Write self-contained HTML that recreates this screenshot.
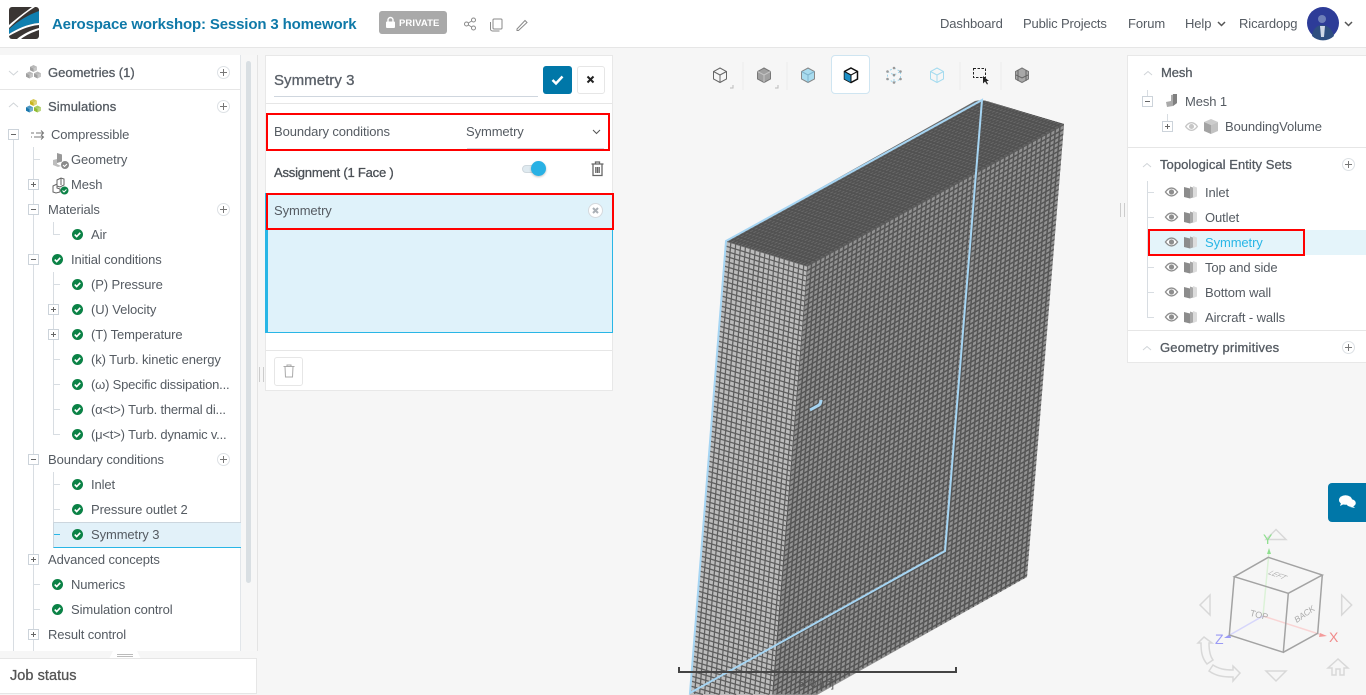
<!DOCTYPE html>
<html lang="en"><head><meta charset="utf-8"><title>Aerospace workshop: Session 3 homework</title>
<style>
html,body{margin:0;padding:0;width:1366px;height:695px;overflow:hidden;background:#f6f6f6;font-family:"Liberation Sans",sans-serif;color:#555b62}
.a{position:absolute}
.t{position:absolute;font-size:13px;line-height:16px;white-space:nowrap;color:#555b62;letter-spacing:-.1px;margin-top:1px}
.b{font-weight:bold}
.m{-webkit-text-stroke:.3px currentColor}
.bx{position:absolute;width:9px;height:9px;border:1px solid #ccd3da;background:#fff}
.bx:before{content:"";position:absolute;left:2px;top:4px;width:5px;height:1px;background:#666}
.bx.p:after{content:"";position:absolute;left:4px;top:2px;width:1px;height:5px;background:#666}
.l{position:absolute;background:#d8dde2}
.plus{position:absolute;width:11px;height:11px;margin:1px 0 0 1px;border:1px solid #dde1e5;border-radius:50%;background:#fff}
.plus:before{content:"";position:absolute;left:2px;top:5px;width:7px;height:1px;background:#777}
.plus:after{content:"";position:absolute;left:5px;top:2px;width:1px;height:7px;background:#777}
.ck{position:absolute;width:11px;height:11px}
svg{position:absolute;overflow:visible}
.r{position:absolute;border:2px solid #f00;box-sizing:border-box}
#vp{position:absolute;left:0;top:0;width:1366px;height:695px;overflow:hidden}
#vp svg{overflow:hidden}
</style></head><body>
<svg width="0" height="0" style="left:0;top:0"><defs>
<symbol id="c" viewBox="0 0 12 12" overflow="visible"><circle cx="6" cy="6" r="6" fill="#0b8246"/><path d="M3 6.100l2.100 2.100 3.900-4" fill="none" stroke="#fff" stroke-width="1.800"/></symbol>
<symbol id="e" viewBox="0 0 14 10" overflow="visible"><path d="M.5 5C3 1.500 5 .8 7 .8s4 .7 6.500 4.200C11 8.500 9 9.200 7 9.200S3 8.500 .5 5z" fill="#fff" stroke="#8e8e8e" stroke-width="1.500"/><circle cx="7" cy="5" r="2.800" fill="#8e8e8e"/></symbol>
<symbol id="f" viewBox="0 0 14 14" overflow="visible"><path d="M0 2l6 1.500v10L0 12z" fill="#8c8c8c"/><path d="M6 1.500l3 1v10l-3 1z" fill="#a8a8a8"/><path d="M9 1l4 1.500v9L9 13z" fill="#dcdcdc"/></symbol>
<symbol id="k" viewBox="0 0 8 8" overflow="visible"><path d="M4 0l4 2-4 2-4-2z" fill="currentColor" opacity=".75"/><path d="M0 2l4 2v4L0 6z" fill="currentColor"/><path d="M8 2L4 4v4l4-2z" fill="currentColor" opacity=".6"/></symbol>
<clipPath id="cL"><path d="M726 241L807 266L772 695H689.500z"/></clipPath>
<clipPath id="cR"><path d="M807 266L1064 124L1027 577L817 695H772z"/></clipPath>
<clipPath id="cT"><path d="M726 241L975 101Q982 99 990 102L1064 124L807 266z"/></clipPath>
<!-- mesh line families, built by doubling -->
<g id="lr1"><path d="M726 241l82.600 25.500"/></g>
<g id="lr2"><use href="#lr1"/><use href="#lr1" transform="translate(-.4 5)"/></g>
<g id="lr4"><use href="#lr2"/><use href="#lr2" transform="translate(-.8 10)"/></g>
<g id="lr8"><use href="#lr4"/><use href="#lr4" transform="translate(-1.600 20)"/></g>
<g id="lr16"><use href="#lr8"/><use href="#lr8" transform="translate(-3.200 40)"/></g>
<g id="lr32"><use href="#lr16"/><use href="#lr16" transform="translate(-6.400 80)"/></g>
<g id="lr64"><use href="#lr32"/><use href="#lr32" transform="translate(-12.800 160)"/></g>
<g id="rr1"><path d="M807 266l257.600 -142"/></g>
<g id="rr2"><use href="#rr1"/><use href="#rr1" transform="translate(-.4 5)"/></g>
<g id="rr4"><use href="#rr2"/><use href="#rr2" transform="translate(-.8 10)"/></g>
<g id="rr8"><use href="#rr4"/><use href="#rr4" transform="translate(-1.600 20)"/></g>
<g id="rr16"><use href="#rr8"/><use href="#rr8" transform="translate(-3.200 40)"/></g>
<g id="rr32"><use href="#rr16"/><use href="#rr16" transform="translate(-6.400 80)"/></g>
<g id="rr64"><use href="#rr32"/><use href="#rr32" transform="translate(-12.800 160)"/></g>
<g id="rc1"><path d="M853 240.600l-36.200 453"/></g>
<g id="rc2"><use href="#rc1"/><use href="#rc1" transform="translate(4.600 -2.540)"/></g>
<g id="rc4"><use href="#rc2"/><use href="#rc2" transform="translate(9.200 -5.080)"/></g>
<g id="rc8"><use href="#rc4"/><use href="#rc4" transform="translate(18.400 -10.160)"/></g>
<g id="rc16"><use href="#rc8"/><use href="#rc8" transform="translate(36.800 -20.320)"/></g>
<g id="rc32"><use href="#rc16"/><use href="#rc16" transform="translate(73.600 -40.640)"/></g>
<g id="tc1"><path d="M726 241l81 25"/></g>
<g id="tc2"><use href="#tc1"/><use href="#tc1" transform="translate(4.600 -2.540)"/></g>
<g id="tc4"><use href="#tc2"/><use href="#tc2" transform="translate(9.200 -5.080)"/></g>
<g id="tc8"><use href="#tc4"/><use href="#tc4" transform="translate(18.400 -10.160)"/></g>
<g id="tc16"><use href="#tc8"/><use href="#tc8" transform="translate(36.800 -20.320)"/></g>
<g id="tc32"><use href="#tc16"/><use href="#tc16" transform="translate(73.600 -40.640)"/></g>
<g id="tr1"><path d="M726 241l257.600 -142"/></g>
<g id="tr2"><use href="#tr1"/><use href="#tr1" transform="translate(3.240 1)"/></g>
<g id="tr4"><use href="#tr2"/><use href="#tr2" transform="translate(6.480 2)"/></g>
<g id="tr8"><use href="#tr4"/><use href="#tr4" transform="translate(12.960 4)"/></g>
<g id="tr16"><use href="#tr8"/><use href="#tr8" transform="translate(25.920 8)"/></g>
</defs></svg>

<!-- viewport mesh -->
<div id="vp">
<svg style="left:0;top:0" width="1366" height="695" fill="none">
<g clip-path="url(#cT)"><rect x="720" y="95" width="350" height="175" fill="#6a6a6a"/>
<g stroke="#525252" stroke-width="1.500">
<use href="#tr16"/><use href="#tr8" transform="translate(51.840 16)"/><use href="#tr2" transform="translate(77.760 24)"/>
<use href="#tc32"/><use href="#tc16" transform="translate(147.200 -81.280)"/><use href="#tc8" transform="translate(220.800 -121.920)"/><use href="#tc1" transform="translate(257.600 -142.240)"/>
</g></g>
<g clip-path="url(#cR)"><rect x="765" y="120" width="305" height="575" fill="#929292"/>
<g stroke="#565656" stroke-width="1.500">
<use href="#rr64"/><use href="#rr16" transform="translate(-25.600 320)"/><use href="#rr4" transform="translate(-32 400)"/><use href="#rr2" transform="translate(-33.600 420)"/>
<path d="M776.300 694L1030.200 554M784.900 694L1029.800 559M793.500 694L1029.400 564M802.200 694L1029 569M810.800 694L1028.600 574"/>
<use href="#rc32"/><use href="#rc8" transform="translate(147.200 -81.280)"/><use href="#rc4" transform="translate(184 -101.600)"/><use href="#rc2" transform="translate(202.400 -111.760)"/><use href="#rc1" transform="translate(211.600 -116.840)"/>
<path d="M807 266L772.800 694M811.600 263.460L777.200 694M816.200 260.900L781.600 694M820.800 258.400L786 694M825.400 255.800L790.400 694M830 253.300L794.700 694M834.600 250.800L799.100 694M839.200 248.200L803.500 694M843.800 245.700L807.900 694M848.400 243.100L812.300 694"/>
</g></g>
<g clip-path="url(#cL)"><rect x="680" y="235" width="130" height="460" fill="#bcbcbc"/>
<g stroke="#5e5e5e" stroke-width="1.250">
<use href="#lr64"/><use href="#lr16" transform="translate(-25.600 320)"/><use href="#lr4" transform="translate(-32 400)"/><use href="#lr2" transform="translate(-33.600 420)"/>
<path d="M691.600 671L769.400 694.500M691.200 676L752.800 694.500M690.800 681L736.200 694.500M690.400 686L719.600 694.500M690 691L703 694.500"/>
<path d="M726 241L689.700 694M730.860 242.500L694.660 694M735.720 244L699.640 694M740.580 245.500L704.620 694M745.440 247L709.600 694M750.300 248.500L714.580 694M755.160 250L719.560 694M760.020 251.500L724.540 694M764.880 253L729.520 694M769.740 254.500L734.500 694M774.600 256L739.480 694M779.460 257.500L744.460 694M784.320 259L749.440 694M789.180 260.500L754.420 694M794.040 262L759.400 694M798.900 263.500L764.380 694M803.760 265L769.360 694M808.620 266.500L774.300 694"/>
</g></g>
<path d="M726 241L982 100L945 551L690 693z" stroke="#a6d5f3" stroke-width="2"/>
<path d="M810 410l9-5q2-2 2-5" stroke="#a6d5f3" stroke-width="3"/>
<path d="M679 667v5H956v-5" stroke="#444" stroke-width="2"/>
</svg>
</div>
<div class="t" style="left:798px;top:675px;font-size:11px;color:#555">500 [m]</div>

<!-- header -->
<div class="a" style="left:0;top:0;width:1366px;height:47px;background:#fff;border-bottom:1px solid #e6e6e6"></div>
<svg style="left:9px;top:7px" width="30" height="32" viewBox="0 0 30 32"><rect width="30" height="32" rx="3" fill="#3a3533"/><path d="M0 18C8 11 16 5 23 0H26C18 5 9 12 0 21z" fill="#fff"/><path d="M0 22C9 14 19 8 30 4V16C18 17 8 22 0 27z" fill="#0f7fb0"/><path d="M0 27C8 22 18 17 30 16V18C18 19 9 24 0 29z" fill="#fff"/><path d="M8 32C14 27 22 23 30 21V23C24 25 17 28 12 32z" fill="#fff"/></svg>
<div class="t b" style="left:52px;top:16px;font-size:15px;color:#0f79a8;letter-spacing:-.15px">Aerospace workshop: Session 3 homework</div>
<div class="a" style="left:379px;top:11px;width:68px;height:23px;background:#a9a9a9;border-radius:3px"></div>
<svg style="left:386px;top:17px" width="10" height="11" viewBox="0 0 10 11"><rect y="4.500" width="9" height="6.500" rx="1" fill="#fff"/><path d="M2 5V3a2.500 2.500 0 0 1 5 0v2" fill="none" stroke="#fff" stroke-width="1.400"/></svg>
<div class="t b" style="left:399px;top:15px;font-size:9.500px;color:#fff;letter-spacing:.1px">PRIVATE</div>
<svg style="left:464px;top:17px" width="70" height="16" fill="none" stroke="#8a8a8a" stroke-width="1"><circle cx="2.500" cy="7" r="2"/><circle cx="9.500" cy="3" r="2"/><circle cx="9.500" cy="11" r="2"/><path d="M4.300 6l3.400-2M4.300 8l3.400 2"/><rect x="29" y="2" width="9" height="10" rx="1"/><path d="M26.500 5v7a2 2 0 0 0 2 2h7"/><path d="M53 12l8-8.500 2 2-8.500 8H53z"/></svg>
<div class="t" style="left:940px;top:15px">Dashboard</div>
<div class="t" style="left:1023px;top:15px;letter-spacing:-.15px">Public Projects</div>
<div class="t" style="left:1128px;top:15px">Forum</div>
<div class="t" style="left:1185px;top:15px">Help</div>
<svg style="left:1217px;top:21px" width="9" height="6" fill="none" stroke="#555" stroke-width="1.500"><path d="M1 1l3.500 3.500L8 1"/></svg>
<div class="t" style="left:1239px;top:15px">Ricardopg</div>
<svg style="left:1307px;top:7px" width="32" height="32" viewBox="0 0 32 32"><circle cx="16" cy="16" r="16" fill="#2d3c98"/><circle cx="15" cy="12" r="4" fill="#6e7fb8"/><path d="M5 29c1-8 6-11 10-11s10 3 12 11a16 16 0 0 1-22 0z" fill="#2e4f80"/><path d="M13 19h5l-1 11h-3z" fill="#cfd8e6"/></svg>
<svg style="left:1344px;top:21px" width="9" height="6" fill="none" stroke="#555" stroke-width="1.500"><path d="M1 1l3.500 3.500L8 1"/></svg>

<!-- left panel -->
<div class="a" style="left:0;top:55px;width:257px;height:596px;background:#fff;border-right:1px solid #e4e4e4"></div>
<div class="a" style="left:240px;top:55px;width:1px;height:596px;background:#e2e6ea"></div>
<div class="a" style="left:241px;top:55px;width:16px;height:596px;background:#f7f7f7"></div>
<div class="a" style="left:246px;top:61px;width:5px;height:522px;background:#d9dfe3;border-radius:3px"></div>
<div class="a" style="left:0;top:89px;width:240px;height:1px;background:#e6e6e6"></div>
<svg style="left:8px;top:69px" width="12" height="40" fill="none" stroke="#d0d4d8" stroke-width="1"><path d="M1 2l4.500 4L10 2M1 38l4.500-4 4.500 4"/></svg>
<svg style="left:26px;top:65px" width="16" height="14"><g color="#a0a0a0"><use href="#k" x="4" y="0" width="7" height="7"/><use href="#k" x="0" y="6.500" width="7" height="7"/><use href="#k" x="8" y="6.500" width="7" height="7"/></g></svg>
<svg style="left:26px;top:99px" width="16" height="14"><use href="#k" x="4" y="0" width="7" height="7" color="#c9b51e"/><use href="#k" x="0" y="6.500" width="7" height="7" color="#1877ad"/><use href="#k" x="8" y="6.500" width="7" height="7" color="#8fbb2e"/></svg>
<div class="t m" style="left:48px;top:64px;letter-spacing:0">Geometries (1)</div>
<div class="t m" style="left:48px;top:98px;letter-spacing:.1px">Simulations</div>
<div class="plus" style="left:216px;top:65px"></div>
<div class="plus" style="left:216px;top:99px"></div>

<!-- tree lines -->
<div class="l" style="left:13px;top:140px;width:1px;height:511px"></div>
<div class="l" style="left:33px;top:147px;width:1px;height:504px"></div>
<div class="l" style="left:33px;top:159px;width:7px;height:1px"></div>
<div class="l" style="left:33px;top:584px;width:7px;height:1px"></div>
<div class="l" style="left:33px;top:609px;width:7px;height:1px"></div>
<div class="l" style="left:53px;top:222px;width:1px;height:13px"></div>
<div class="l" style="left:53px;top:234px;width:7px;height:1px"></div>
<div class="l" style="left:53px;top:272px;width:1px;height:163px"></div>
<div class="l" style="left:53px;top:284px;width:7px;height:1px"></div>
<div class="l" style="left:53px;top:359px;width:7px;height:1px"></div>
<div class="l" style="left:53px;top:384px;width:7px;height:1px"></div>
<div class="l" style="left:53px;top:409px;width:7px;height:1px"></div>
<div class="l" style="left:53px;top:434px;width:7px;height:1px"></div>
<div class="l" style="left:53px;top:472px;width:1px;height:63px"></div>
<div class="l" style="left:53px;top:484px;width:7px;height:1px"></div>
<div class="l" style="left:53px;top:509px;width:7px;height:1px"></div>
<div class="a" style="left:53px;top:522px;width:187px;height:24px;background:#e2f1f9;border-top:1px solid #ccd6de;border-bottom:1px solid #29b6e6;border-left:1px solid #ccd6de"></div>
<div class="a" style="left:54px;top:534px;width:6px;height:1px;background:#29b6e6"></div>

<div class="bx" style="left:8px;top:129px"></div>
<div class="bx p" style="left:28px;top:179px"></div>
<div class="bx" style="left:28px;top:204px"></div>
<div class="bx" style="left:28px;top:254px"></div>
<div class="bx p" style="left:48px;top:304px"></div>
<div class="bx p" style="left:48px;top:329px"></div>
<div class="bx" style="left:28px;top:454px"></div>
<div class="bx p" style="left:28px;top:554px"></div>
<div class="bx p" style="left:28px;top:629px"></div>

<svg style="left:30px;top:128px" width="16" height="13" fill="none" stroke="#777" stroke-width="1"><path d="M1 5h3M6 5h7m-2-2.500l2.500 2.500L11 7.500M1 9h1M4 9h9m-2-2l2.500 2L11 11.500"/></svg>
<svg style="left:52px;top:152px" width="17" height="17" viewBox="0 0 17 17"><path d="M5 1l5 1.500v7L5 11z" fill="#999"/><path d="M1 8l4-1v5l4 2-3 1-5-2z" fill="#bdbdbd"/><circle cx="13" cy="13" r="4" fill="#8a8a8a"/><path d="M11 13l1.500 1.500 2.500-2.500" stroke="#fff" fill="none"/></svg>
<svg style="left:52px;top:177px" width="17" height="18" viewBox="0 0 17 18" fill="none" stroke="#666"><path d="M5 3l4-2 3 1v6l-4 2-3-1zM1 9l4-2v4l3 1v3l-4 1-3-1zM5 3v6M9 1v7"/><circle cx="12.500" cy="13.500" r="4" fill="#0b8246" stroke="none"/><path d="M10.500 13.500l1.500 1.500 2.500-2.500" stroke="#fff"/></svg>

<div class="t" style="left:51px;top:126px">Compressible</div>
<div class="t" style="left:71px;top:151px">Geometry</div>
<div class="t" style="left:71px;top:176px">Mesh</div>
<div class="t" style="left:48px;top:201px">Materials</div>
<div class="plus" style="left:216px;top:202px"></div>
<svg class="ck" style="left:72px;top:229px"><use href="#c" width="11" height="11"/></svg><div class="t" style="left:91px;top:226px">Air</div>
<svg class="ck" style="left:52px;top:254px"><use href="#c" width="11" height="11"/></svg><div class="t" style="left:71px;top:251px">Initial conditions</div>
<svg class="ck" style="left:72px;top:279px"><use href="#c" width="11" height="11"/></svg><div class="t" style="left:91px;top:276px">(P) Pressure</div>
<svg class="ck" style="left:72px;top:304px"><use href="#c" width="11" height="11"/></svg><div class="t" style="left:91px;top:301px">(U) Velocity</div>
<svg class="ck" style="left:72px;top:329px"><use href="#c" width="11" height="11"/></svg><div class="t" style="left:91px;top:326px">(T) Temperature</div>
<svg class="ck" style="left:72px;top:354px"><use href="#c" width="11" height="11"/></svg><div class="t" style="left:91px;top:351px">(k) Turb. kinetic energy</div>
<svg class="ck" style="left:72px;top:379px"><use href="#c" width="11" height="11"/></svg><div class="t" style="left:91px;top:376px;letter-spacing:-.2px">(ω) Specific dissipation...</div>
<svg class="ck" style="left:72px;top:404px"><use href="#c" width="11" height="11"/></svg><div class="t" style="left:91px;top:401px;letter-spacing:-.2px">(α&lt;t&gt;) Turb. thermal di...</div>
<svg class="ck" style="left:72px;top:429px"><use href="#c" width="11" height="11"/></svg><div class="t" style="left:91px;top:426px;letter-spacing:-.2px">(μ&lt;t&gt;) Turb. dynamic v...</div>
<div class="t" style="left:48px;top:451px">Boundary conditions</div>
<div class="plus" style="left:216px;top:452px"></div>
<svg class="ck" style="left:72px;top:479px"><use href="#c" width="11" height="11"/></svg><div class="t" style="left:91px;top:476px">Inlet</div>
<svg class="ck" style="left:72px;top:504px"><use href="#c" width="11" height="11"/></svg><div class="t" style="left:91px;top:501px">Pressure outlet 2</div>
<svg class="ck" style="left:72px;top:529px"><use href="#c" width="11" height="11"/></svg><div class="t" style="left:91px;top:526px">Symmetry 3</div>
<div class="t" style="left:48px;top:551px">Advanced concepts</div>
<svg class="ck" style="left:52px;top:579px"><use href="#c" width="11" height="11"/></svg><div class="t" style="left:71px;top:576px">Numerics</div>
<svg class="ck" style="left:52px;top:604px"><use href="#c" width="11" height="11"/></svg><div class="t" style="left:71px;top:601px">Simulation control</div>
<div class="t" style="left:48px;top:626px">Result control</div>

<!-- job status -->
<div class="a" style="left:0;top:651px;width:257px;height:7px;background:#f6f6f6"></div>
<svg style="left:109px;top:651px" width="32" height="8"><path d="M0 8L4 0H28L32 8z" fill="#fff"/><path d="M8 3.500H24M8 5.500H24" stroke="#bbb"/></svg>
<div class="a" style="left:0;top:658px;width:256px;height:34px;background:#fff;border:1px solid #e6e6e6;border-left:0"></div>
<div class="t m" style="left:10px;top:667px;font-size:14.500px;color:#555;letter-spacing:.05px">Job status</div>

<!-- middle panel -->
<div class="a" style="left:265px;top:55px;width:348px;height:336px;background:#fff;border:1px solid #e8e8e8;box-sizing:border-box"></div>
<div class="t m" style="left:274px;top:71px;font-size:15px;line-height:17px;color:#5a6068;letter-spacing:.05px">Symmetry 3</div>
<div class="a" style="left:274px;top:96px;width:264px;height:1px;background:#cfd6de"></div>
<div class="a" style="left:266px;top:103px;width:346px;height:1px;background:#e6e6e6"></div>
<div class="a" style="left:543px;top:66px;width:29px;height:28px;background:#0077a8;border-radius:3px"></div>
<svg style="left:551px;top:74px" width="13" height="12" fill="none" stroke="#fff" stroke-width="2.500"><path d="M1.500 6l3.500 3.500L11.500 2.500"/></svg>
<div class="a" style="left:577px;top:66px;width:26px;height:26px;background:#fff;border:1px solid #e6e6e6;border-radius:3px"></div>
<svg style="left:586px;top:75px" width="10" height="10" fill="none" stroke="#222" stroke-width="2"><path d="M1.500 1.500l6 6M7.500 1.500l-6 6"/></svg>
<div class="t" style="left:274px;top:123px">Boundary conditions</div>
<div class="t" style="left:466px;top:123px">Symmetry</div>
<svg style="left:592px;top:129px" width="9" height="6" fill="none" stroke="#555"><path d="M1 1l3.500 3.500L8 1"/></svg>
<div class="a" style="left:467px;top:148px;width:137px;height:1px;background:#cfd6de"></div>
<div class="r" style="left:266px;top:113px;width:344px;height:38px"></div>
<div class="t m" style="left:274px;top:164px;color:#4a4f55;letter-spacing:-.2px">Assignment (1 Face )</div>
<div class="a" style="left:522px;top:165px;width:20px;height:8px;background:#dfeaf0;border:1px solid #cfd8de;border-radius:5px;box-sizing:border-box"></div>
<div class="a" style="left:531px;top:161px;width:15px;height:15px;background:#29b1e4;border-radius:50%;box-shadow:0 1px 2px rgba(0,0,0,.25)"></div>
<svg style="left:591px;top:161px" width="13" height="16" fill="none" stroke="#666" stroke-width="1.300"><path d="M.5 3h12M4.500 3V1h4v2M2 3v11.500h9V3M4.800 6v6M6.500 6v6M8.200 6v6"/></svg>
<div class="a" style="left:265px;top:193px;width:348px;height:140px;box-sizing:border-box;background:#dff2fa;border:1px solid #29b6e6;border-left:3px solid #29b6e6"></div>
<div class="r" style="left:266px;top:193px;width:348px;height:37px"></div>
<div class="t" style="left:274px;top:202px">Symmetry</div>
<svg style="left:588px;top:203px" width="15" height="15"><circle cx="7.500" cy="7.500" r="7" fill="#fff" stroke="#d5d9dd"/><path d="M5 5l5 5M10 5l-5 5" stroke="#aab0b6" stroke-width="2"/></svg>
<div class="a" style="left:266px;top:350px;width:346px;height:1px;background:#e6e6e6"></div>
<div class="a" style="left:274px;top:357px;width:27px;height:27px;background:#fff;border:1px solid #e6e6e6;border-radius:3px"></div>
<svg style="left:283px;top:364px" width="12" height="14" fill="none" stroke="#aaa"><path d="M.5 2.500h11M4 2.500V1h4v1.500M2 2.500l.5 10.500h7L10 2.500"/></svg>
<div class="a" style="left:259px;top:367px;width:3px;height:15px;border-left:1px solid #ccc;border-right:1px solid #ccc"></div>

<!-- toolbar -->
<div class="a" style="left:831px;top:55px;width:37px;height:37px;background:#fff;border:1px solid #cfe5f1;border-radius:4px"></div>
<svg style="left:700px;top:60px" width="340" height="30" viewBox="700 60 340 30" fill="none" stroke-width="1">
<g stroke="#666"><path d="M720 68l6.500 3.500v7.500l-6.500 3.500-6.500-3.500v-7.500z M713.500 71.500l6.500 3.500 6.500-3.500M720 75v7.500"/></g>
<path d="M730 88h3v-3M775 88h3v-3" stroke="#bbb"/>
<path d="M764 68l6.500 3.500v7.500l-6.500 3.500-6.500-3.500v-7.500z" fill="#a0a0a0" stroke="#777"/><path d="M757.500 71.500l6.500 3.500 6.500-3.500M764 75v7.500" stroke="#c4c4c4"/>
<path d="M808 68l6.500 3.500v7.500l-6.500 3.500-6.500-3.500v-7.500z" fill="#a9dcef" stroke="#888"/><path d="M801.500 71.500l6.500 3.500 6.500-3.500M808 75v7.500" stroke="#7fb4cc"/>
<path d="M851 68l6.500 3.500v7.500l-6.500 3.500-6.500-3.500v-7.500z" fill="#fff" stroke="#111" stroke-width="1.500"/><path d="M844.500 71.500L851 75v7.500l-6.500-3.500z" fill="#1c8fc6"/><path d="M844.500 71.500l6.500 3.500 6.500-3.500M851 75v7.500" stroke="#111"/>
<path d="M894 68l6.500 3.500v7.500l-6.500 3.500-6.500-3.500v-7.500zM887.500 71.500l6.500 3.500 6.500-3.500M894 75v7.500" stroke="#9fd6ec" stroke-dasharray="2 2"/><g fill="#999"><circle cx="894" cy="68" r="1.300"/><circle cx="900.500" cy="71.500" r="1.300"/><circle cx="900.500" cy="79" r="1.300"/><circle cx="894" cy="82.500" r="1.300"/><circle cx="887.500" cy="79" r="1.300"/><circle cx="887.500" cy="71.500" r="1.300"/><circle cx="894" cy="75" r="1.300"/></g>
<path d="M937 68l6.500 3.500v7.500l-6.500 3.500-6.500-3.500v-7.500zM930.500 71.500l6.500 3.500 6.500-3.500M937 75v7.500" stroke="#a5dbef"/>
<rect x="973.500" y="68.500" width="12" height="9" stroke="#222" stroke-dasharray="2.500 1.500"/><path d="M983 76v7.500l2-2 2 3 1-.5-1.500-3h2.500z" fill="#222" stroke="none"/>
<path d="M1022 68l6.500 3.500v7.500l-6.500 3.500-6.500-3.500v-7.500z" fill="#a8a8a8" stroke="#777"/><path d="M1018 70v11M1026 70v11M1016 75l6 3 6-3" stroke="#666"/>
<g stroke="#ececec"><path d="M743 62v28M787 62v28M960 62v28M1001 62v28"/></g>
</svg>

<!-- right panel -->
<div class="a" style="left:1127px;top:55px;width:239px;height:308px;background:#fff;border:1px solid #e8e8e8;border-right:0;box-sizing:border-box"></div>
<div class="t m" style="left:1161px;top:64px">Mesh</div>
<div class="l" style="left:1147px;top:90px;width:1px;height:6px"></div>
<div class="bx" style="left:1142px;top:96px"></div>
<svg style="left:1165px;top:94px" width="14" height="15" viewBox="0 0 14 15"><path d="M6 1l6-1v9l-4 3-6 1-1-5 5-1z" fill="#aaa"/><path d="M8 0h4v9l-4 3z" fill="#808080"/></svg>
<div class="t" style="left:1185px;top:93px">Mesh 1</div>
<div class="l" style="left:1167px;top:114px;width:1px;height:7px"></div>
<div class="bx p" style="left:1162px;top:121px"></div>
<svg style="left:1185px;top:122px" width="13" height="9"><use href="#e" width="13" height="9" opacity=".5"/></svg>
<svg style="left:1204px;top:119px" width="14" height="15" viewBox="0 0 14 15"><path d="M7 0l7 3-7 3-7-3z" fill="#ccc"/><path d="M0 3l7 3v9l-7-3z" fill="#a3a3a3"/><path d="M14 3l-7 3v9l7-3z" fill="#c2c2c2"/></svg>
<div class="t" style="left:1225px;top:118px">BoundingVolume</div>
<div class="a" style="left:1128px;top:147px;width:238px;height:1px;background:#e6e6e6"></div>
<div class="t m" style="left:1160px;top:156px;letter-spacing:.05px">Topological Entity Sets</div>
<div class="plus" style="left:1341px;top:157px"></div>
<div class="l" style="left:1147px;top:181px;width:1px;height:137px"></div>
<div class="l" style="left:1148px;top:192px;width:6px;height:1px"></div>
<div class="l" style="left:1148px;top:217px;width:6px;height:1px"></div>
<div class="l" style="left:1148px;top:267px;width:6px;height:1px"></div>
<div class="l" style="left:1148px;top:292px;width:6px;height:1px"></div>
<div class="l" style="left:1148px;top:317px;width:6px;height:1px"></div>
<div class="a" style="left:1148px;top:230px;width:218px;height:25px;background:#e4f4fa"></div>
<div class="r" style="left:1148px;top:229px;width:157px;height:27px"></div>
<svg style="left:1165px;top:187px" width="30" height="140">
<use href="#e" x="0" y="0" width="13" height="10"/><use href="#f" x="19" y="-2" width="14" height="14"/>
<use href="#e" x="0" y="25" width="13" height="10"/><use href="#f" x="19" y="23" width="14" height="14"/>
<use href="#e" x="0" y="50" width="13" height="10"/><use href="#f" x="19" y="48" width="14" height="14"/>
<use href="#e" x="0" y="75" width="13" height="10"/><use href="#f" x="19" y="73" width="14" height="14"/>
<use href="#e" x="0" y="100" width="13" height="10"/><use href="#f" x="19" y="98" width="14" height="14"/>
<use href="#e" x="0" y="125" width="13" height="10"/><use href="#f" x="19" y="123" width="14" height="14"/>
</svg>
<div class="t" style="left:1205px;top:184px">Inlet</div>
<div class="t" style="left:1205px;top:209px">Outlet</div>
<div class="t" style="left:1205px;top:234px;color:#29b6e6">Symmetry</div>
<div class="t" style="left:1205px;top:259px">Top and side</div>
<div class="t" style="left:1205px;top:284px">Bottom wall</div>
<div class="t" style="left:1205px;top:309px">Aircraft - walls</div>
<div class="a" style="left:1128px;top:330px;width:238px;height:1px;background:#e6e6e6"></div>
<div class="t m" style="left:1160px;top:339px;letter-spacing:.2px">Geometry primitives</div>
<div class="plus" style="left:1341px;top:340px"></div>
<svg style="left:1143px;top:70px" width="12" height="280" fill="none" stroke="#d0d4d8"><path d="M1 5l4-3.500L9 5M0 97l4-3.500L8 97M0 280l4-3.500L8 280"/></svg>
<div class="a" style="left:1120px;top:203px;width:3px;height:14px;border-left:1px solid #ccc;border-right:1px solid #ccc"></div>

<!-- chat -->
<div class="a" style="left:1328px;top:483px;width:38px;height:39px;background:#0077a8;border-radius:4px 0 0 4px"></div>
<svg style="left:1339px;top:495px" width="17" height="14" viewBox="0 0 17 14" fill="#fff"><ellipse cx="6.500" cy="5" rx="6.500" ry="4.800"/><path d="M2 8l-1 3 4-2z"/><ellipse cx="12" cy="8" rx="4.800" ry="3.800"/><path d="M14 11l2 2-5-1z"/></svg>

<!-- gizmo -->
<svg class="a" style="left:0;top:0" width="1366" height="695" fill="none">
<path d="M1263 616L1269 552" stroke="#dcf2d8" stroke-width="1.500"/><path d="M1269 548l-2 6h4z" fill="#8fe08f"/>
<path d="M1263 616L1322 635" stroke="#f9d4d4" stroke-width="1.500"/><path d="M1327 636l-7-3 -1 4z" fill="#f49a9a"/>
<path d="M1263 616L1228 636" stroke="#d6d6fb" stroke-width="1.500"/><path d="M1224 638l6-4 1 4z" fill="#9a9af5"/>
<path d="M1268.300 557.300L1322.300 575L1288.300 593.300L1234.300 576.700zM1234.300 576.700L1229.300 635L1283.300 652.300L1288.300 593.300M1283.300 652.300L1317.700 633.300L1322.300 575" stroke="#a3a3a3" stroke-width="1.500"/>
<g stroke="#d8d8d8" stroke-width="1.500">
<path d="M1276 529.500l10 10h-20zM1210 595v20l-10-10zM1341.700 595v20l10-10zM1266 671h20l-10 10z"/>
<path d="M1338 659l-10 9h4v7h4v-6h4v6h4v-7h4z"/>
<path d="M1204 637l-6 6h3c0 9 1 15 6 21l6-4c-3-4-4-9-4-17h3zM1213 665c6 4 12 5 20 5v-4l7 7-7 8v-4c-10 0-17-1-24-6z"/>
</g>
</svg>
<div class="t" style="left:1263px;top:530px;font-size:14px;color:#8fe08f">Y</div>
<div class="t" style="left:1329px;top:628px;font-size:14px;color:#f08a8a">X</div>
<div class="t" style="left:1215px;top:630px;font-size:14px;color:#9a9af5">Z</div>
<div class="t" style="left:1250px;top:606px;font-size:9px;color:#aaa;transform:rotate(14deg)">TOP</div>
<div class="t" style="left:1293px;top:605px;font-size:8.500px;font-style:italic;color:#aaa;transform:rotate(-35deg)">BACK</div>
<div class="t" style="left:1268px;top:567px;font-size:7px;font-style:italic;color:#aaa;transform:rotate(20deg) skewX(-30deg)">LEFT</div>
</body></html>
